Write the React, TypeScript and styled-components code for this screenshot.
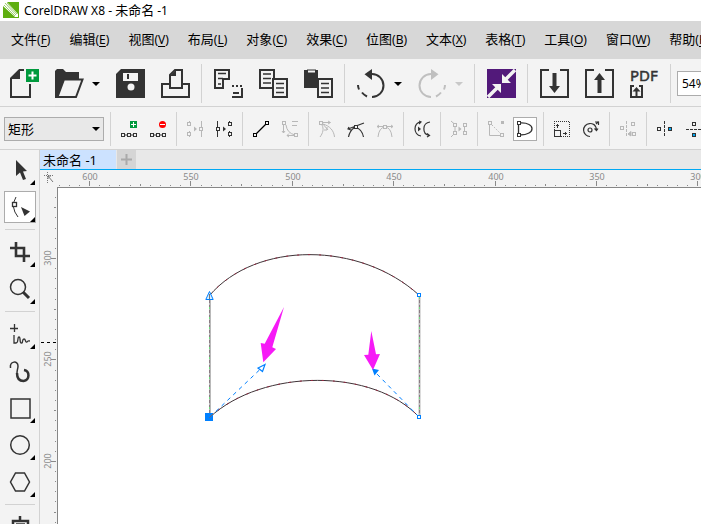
import React, { useEffect, useRef, useState } from "react";
import styled, { createGlobalStyle, css } from "styled-components";

const ink = "#333333";
const faint = "#b8b8b8";
const line = "#d2d2d2";
const panel = "#f3f3f3";
const blue = "#0080ff";
const cjk = `"Noto Sans", "Noto Sans CJK SC", sans-serif`;

const Global = createGlobalStyle`
  * { box-sizing: border-box; }
  html, body, #root { height: 100%; }
  body { margin: 0; overflow: hidden; background: #fff; color: #000; font-family: ${cjk}; }
  button { border: 0; padding: 0; background: none; color: inherit; font-family: inherit; }
  svg { display: block; flex: none; }
`;

const Window = styled.div`
  display: flex;
  flex-direction: column;
  height: 100vh;
  min-width: 0;
  overflow: hidden;
`;

const TitleBar = styled.header`
  display: flex;
  align-items: center;
  gap: 5px;
  height: 21px;
  flex: none;
  padding: 0 0 1px 3px;
  background: #fff;
  white-space: nowrap;
`;

const Title = styled.h1`
  margin: 0;
  font-size: 13px;
  line-height: 20px;
  font-weight: 400;
  font-family: ${cjk};
`;

const Latin = styled.span`
  font-size: 12px;
`;

const MenuBar = styled.nav`
  display: flex;
  align-items: center;
  gap: 19px;
  height: 38px;
  flex: none;
  padding: 0 0 2px 11px;
  background: #d7d7d7;
`;

const MenuItem = styled.button`
  flex: none;
  font-size: 13px;
  line-height: 20px;
  white-space: nowrap;
`;

const Key = styled.span`
  font-size: 12px;
  u { text-underline-offset: 2px; }
`;

const Bar = styled.div<{ $h: number }>`
  display: flex;
  align-items: center;
  flex: none;
  height: ${(p) => p.$h}px;
  padding-top: 2px;
  background: ${panel};
  border-bottom: 1px solid ${line};
`;

const Group = styled.div<{ $first?: boolean }>`
  display: flex;
  align-items: center;
  flex: none;
  gap: 16px;
  height: 39px;
  padding: 0 11px 0 ${(p) => (p.$first ? 10 : 12)}px;
  border-right: 1px solid ${line};
`;

const PropGroup = styled.div`
  display: flex;
  align-items: center;
  flex: none;
  gap: 13px;
  height: 34px;
  padding: 0 10px;
  border-right: 1px solid ${line};
`;

const PropButton = styled.button<{ $on?: boolean }>`
  flex: none;
  ${(p) =>
    p.$on &&
    css`
      margin: 0 -4px;
      padding: 3px;
      background: #fff;
      border: 1px solid #acacac;
    `}
`;

const Split = styled.div`
  display: flex;
  align-items: center;
`;

const ArrowButton = styled.button`
  display: flex;
  justify-content: flex-end;
  width: 16px;
  height: 29px;
  align-items: center;
`;

const ZoomInput = styled.input`
  width: 80px;
  height: 25px;
  flex: none;
  margin-left: 6px;
  padding: 0 4px;
  border: 1px solid #acacac;
  background: #fff;
  font: 12px ${cjk};
`;

const SelectBox = styled.label`
  position: relative;
  flex: none;
  width: 100px;
  margin: 0 6px 0 4px;
  svg { position: absolute; right: 4px; top: 10px; pointer-events: none; }
`;

const Select = styled.select`
  display: block;
  appearance: none;
  width: 100%;
  height: 24px;
  padding: 0 3px;
  border: 1px solid #acacac;
  border-radius: 0;
  background: #e8e8e8;
  color: #000;
  font: 13px ${cjk};
`;

const Rule = styled.span`
  flex: none;
  width: 1px;
  height: 34px;
  background: ${line};
`;

const Main = styled.main`
  display: flex;
  flex: 1;
  min-height: 0;
`;

const Toolbox = styled.aside`
  display: flex;
  flex-direction: column;
  gap: 5px;
  width: 40px;
  flex: none;
  padding: 4px 3px 0 4px;
  background: ${panel};
  border-right: 1px solid ${line};
  overflow: hidden;
`;

const Tool = styled.button<{ $on?: boolean }>`
  flex: none;
  width: 32px;
  height: 32px;
  ${(p) => p.$on && "background: #fff; box-shadow: inset 0 0 0 1px #acacac;"}
`;

const ToolRule = styled.span`
  flex: none;
  height: 1px;
  margin: 1px 1px;
  background: ${line};
`;

const Workspace = styled.section`
  display: flex;
  flex-direction: column;
  flex: 1;
  min-width: 0;
`;

const Tabs = styled.div`
  display: flex;
  gap: 1px;
  flex: none;
  height: 20px;
  background: #e8e8e8;
  border-bottom: 1px solid #00a8f3;
`;

const Tab = styled.button`
  width: 76px;
  padding: 0 3px;
  background: #cce2ff;
  font-size: 13px;
  line-height: 18px;
  text-align: left;
  white-space: nowrap;
`;

const AddTab = styled.button`
  display: grid;
  place-items: center;
  width: 19px;
  background: #d5d5d5;
`;

const RulerGrid = styled.div`
  display: grid;
  grid-template: 18px minmax(0, 1fr) / 18px minmax(0, 1fr);
  flex: 1;
  min-height: 0;
  background: ${panel};
`;

const Corner = styled.button`
  overflow: hidden;
`;

const TopRuler = styled.div`
  min-width: 0;
  overflow: hidden;
  margin-left: -1px;
  border-bottom: 1px solid #868686;
`;

const SideRuler = styled.div`
  min-height: 0;
  overflow: hidden;
  border-right: 1px solid #868686;
`;

const Canvas = styled.div`
  min-width: 0;
  min-height: 0;
  overflow: hidden;
  background: #fff;
`;

const Big = ({ c = ink, children }: { c?: string; children: React.ReactNode }) => (
  <svg width="29" height="29" viewBox="0 0 29 29" fill="none" stroke={c} strokeWidth="2" overflow="visible">
    {children}
  </svg>
);

const Small = ({ c = ink, children }: { c?: string; children: React.ReactNode }) => (
  <svg width="16" height="16" viewBox="0 0 16 16" fill="none" stroke={c} overflow="visible">
    {children}
  </svg>
);

const Node = ({ x, y, fill = panel }: { x: number; y: number; fill?: string }) => (
  <rect x={x + 0.5} y={y + 0.5} width="3" height="3" fill={fill} />
);

const Down = ({ c = "#000" }: { c?: string }) => (
  <svg width="8" height="4" viewBox="0 0 8 4">
    <path d="M0 0H8L4 4Z" fill={c} />
  </svg>
);

const PageLines = () => (
  <>
    <rect x="14" y="10" width="14" height="18" fill={panel} />
    <path d="M17 14.5H25M17 19H25M17 23.5H25" strokeWidth="1.5" />
  </>
);

const Turn = ({ c, flip }: { c?: string; flip?: boolean }) => (
  <Big c={c}>
    <g transform={flip ? "translate(28 0) scale(-1 1)" : undefined}>
      <path d="M15 5A11.500 11.500 0 1 1 15 28" />
      <path d="M10 27.500Q7 26 5 23.500M2 20.500Q1 18 1 16" />
      <path d="M7.500 5.200L15 0V11Z" fill={c || ink} stroke="none" />
    </g>
  </Big>
);

const menus = [
  ["文件", "F"], ["编辑", "E"], ["视图", "V"], ["布局", "L"], ["对象", "C"], ["效果", "C"],
  ["位图", "B"], ["文本", "X"], ["表格", "T"], ["工具", "O"], ["窗口", "W"], ["帮助", "H"],
];

const propGroups: { name: string; on?: boolean; icon: React.ReactNode }[][] = [
  [
    { name: "添加节点", icon: <Small><rect x="9" width="7" height="7" fill="#009a3d" stroke="none" /><path d="M12.5 1V6M10 3.5H15" stroke="#fff" /><path d="M2 14H14" /><Node x={0} y={12} /><Node x={6} y={12} /><Node x={12} y={12} /></Small> },
    { name: "删除节点", icon: <Small><circle cx="12.5" cy="3.5" r="3.5" fill="#f00" stroke="none" /><path d="M10 3.5H15" stroke="#fff" /><path d="M2 14H14" /><Node x={0} y={12} /><Node x={6} y={12} /><Node x={12} y={12} /></Small> },
  ],
  [
    { name: "连接节点", icon: <Small c={faint}><path d="M2.5 0V5M2.5 10V16M14.5 0V16" /><Node x={0} y={1} /><Node x={0} y={11} /><Node x={12} y={6} /><path d="M7 5.5L10 8L7 10.5Z" fill={faint} stroke="none" /></Small> },
    { name: "断开曲线", icon: <Small><path d="M1.5 0V16M13.5 0V5M13.5 10V16" /><Node x={0} y={6} /><Node x={12} y={1} /><Node x={12} y={11} /><path d="M7 5.5L10 8L7 10.5Z" fill={ink} stroke="none" /></Small> },
  ],
  [
    { name: "转换为线条", icon: <Small c="#000"><path d="M2 14L14 2" strokeWidth="1.3" /><Node x={0} y={12} /><Node x={12} y={0} /></Small> },
    { name: "转换为曲线", icon: <Small c={faint}><path d="M1.5 3V12M0 10L1.5 12L3 10M4 4Q5 12 13 14M13 14.500H5M7 12.500L5 14.500L7 16M10 .5H16M10 4.500H15" /><Node x={0} y={0} /><Node x={12} y={12} /></Small> },
  ],
  [
    { name: "尖突节点", icon: <Small c={faint}><path d="M2 1.5H11M9 0L11.5 1.5L9 3M3 2L9 9M8 6V9H5M4 3C11 5 15 10 15.5 16M3 4C5 8 4 12 1 16" /><Node x={0} y={0} /></Small> },
    { name: "平滑节点", icon: <Small><path d="M0 8L16 2M1 6L0 8L3 9M.5 16Q1.5 10 7 6Q14 8 15.5 16" strokeWidth="1.2" /><Node x={6} y={4} /></Small> },
    { name: "对称节点", icon: <Small c={faint}><path d="M0 5.5H16M2 4L0 5.5L2 7M14 4L16 5.5L14 7M1 16Q2 6.5 8 6Q14 6.5 15 16" /><Node x={6} y={4} /></Small> },
  ],
  [{ name: "反转方向", icon: <Small><path d="M7 1C-1 1-1 14 7 15M5 0L7 1L5 3M16 1C8 2 8 13 15 14.5M13 12.5L15.5 14.5L13 16" strokeWidth="1.2" /><path d="M4 5.5L7 8L4 10.5Z" fill={ink} stroke="none" /></Small> }],
  [{ name: "延长曲线", icon: <Small c={faint}><path d="M0 0L4 3.5V12L0 16M13.5 3V13" /><Node x={2} y={2} /><Node x={2} y={10} /><Node x={12} y={2} /><Node x={12} y={10} /><path d="M7.5 5.5L10.5 8L7.5 10.5Z" fill={faint} stroke="none" /></Small> }],
  [
    { name: "提取子路径", icon: <Small c={faint}><path d="M1.5 3V14.5H13" /><path d="M4 4L13 13" strokeDasharray="1.5 1.5" /><Node x={0} y={0} /><Node x={12} y={12} /><path d="M13 0H16V3H13Z" fill={faint} stroke="none" /></Small> },
    { name: "闭合曲线", on: true, icon: <Small><path d="M1.5 2V14M3 2C19 1 19 14 3 14" strokeWidth="1.3" /><Node x={0} y={0} fill="#fff" /><Node x={0} y={12} fill="#fff" /></Small> },
  ],
  [
    { name: "缩放节点", icon: <Small><path d="M0 .5H16M15.5 1V16M16 15.5H7M.5 0V9" strokeDasharray="1 1" /><rect x=".5" y="9.5" width="6" height="6" /><path d="M3.5 3V7M2 4.5H5M9 12.5H13M11.5 11V14" /></Small> },
    { name: "旋转节点", icon: <Small><path d="M13.5 8A6.5 6.5 0 1 0 7 15.5M10 3Q13 4 13.5 9M11.5 7.5L13.5 9.5L15 7.5M13 3L15.5 .5M12 1H15.5V4" strokeWidth="1.2" /><circle cx="7" cy="9" r="2" strokeWidth="1.2" /></Small> },
  ],
  [{ name: "对齐节点", icon: <Small c={faint}><path d="M6.5 0V16" strokeDasharray="3 1" /><Node x={0} y={5} /><Node x={11} y={1} /><Node x={12} y={11} /><path d="M8 13L11 10.5V15Z" fill={faint} /></Small> }],
  [
    { name: "水平反射节点", icon: <Small><path d="M7.5 0V16" strokeDasharray="3 1" /><Node x={0} y={6} /><Node x={11} y={6} fill="#00a8f3" /></Small> },
    { name: "垂直反射节点", icon: <Small><path d="M0 8.5H16" strokeDasharray="3 1" /><Node x={6} y={1} /><Node x={6} y={12} fill="#00a8f3" /></Small> },
  ],
];

const tools: ({ name: string; on?: boolean; plain?: boolean; icon: React.ReactNode } | null)[] = [
  { name: "选择工具", icon: <path d="M12 6V22L16 18.5L19 26L22 25L19 17.5L23 17Z" fill={ink} stroke="none" /> },
  { name: "形状工具", on: true, icon: <><path d="M12 6Q6 16 14 26" /><rect x="8.5" y="11.5" width="4" height="4" fill="#fff" strokeWidth="1.3" /><path d="M17 16L26 20.5L20.5 25Z" fill={ink} stroke="none" /></> },
  null,
  { name: "裁剪工具", icon: <path d="M6 12H20V26M12 6V20H26" strokeWidth="2.6" /> },
  { name: "缩放工具", icon: <><circle cx="14" cy="14" r="7.5" strokeWidth="1.5" /><path d="M19 19L25 25" strokeWidth="3" /></> },
  null,
  { name: "手绘工具", icon: <path d="M10.500 6V14M6 10.500H14M10 17V25H12C15 25 13 19 15 19C17 19 15 26 18 25C19 24 18 21 20 21C22 21 21 25 23 24C24 22 25 23 26 23" strokeWidth="1.300" /> },
  { name: "艺术笔工具", plain: true, icon: <><path d="M6.500 13C5.500 6 14 5 14 11C14 14 12.500 16 13 20" strokeWidth="1.500" /><path d="M13 18C13 24 16 26 19.500 26C26 25 26 16 20 15" strokeWidth="2.500" /></> },
  { name: "矩形工具", icon: <rect x="7" y="7" width="19" height="19" strokeWidth="1.5" /> },
  { name: "椭圆形工具", icon: <circle cx="16" cy="16" r="9.3" strokeWidth="1.5" /> },
  { name: "多边形工具", icon: <path d="M11.5 7H20.5L25.5 16L20.5 25H11.5L6.5 16Z" strokeWidth="1.5" /> },
  null,
  { name: "文本工具", icon: <path d="M16 5V9M9 26V10H24V26M12 13.500H21" strokeWidth="2.500" /> },
];

const STEP = 10.14;

const useSize = () => {
  const ref = useRef<HTMLDivElement>(null);
  const [size, setSize] = useState({ width: 644, height: 336 });
  useEffect(() => {
    if (!ref.current) return;
    const observer = new ResizeObserver(([entry]) => {
      const { width, height } = entry.contentRect;
      setSize({ width: Math.ceil(width), height: Math.ceil(height) });
    });
    observer.observe(ref.current);
    return () => observer.disconnect();
  }, []);
  return { ref, ...size };
};

const ticks = (origin: number, length: number) => {
  const first = Math.ceil(-origin / STEP);
  const last = Math.floor((length - 1 - origin) / STEP);
  return Array.from({ length: Math.max(0, last - first + 1) }, (_, i) => i + first);
};

const HorizontalRuler = () => {
  const { ref, width } = useSize();
  return (
    <TopRuler ref={ref}>
      <svg width={width} height="17" fill="#8a8a8a" fontFamily="Noto Sans" fontSize="9">
        {ticks(32, width).map((i) => {
          const x = Math.round(32 + i * STEP);
          const major = i % 10 === 0;
          const mid = Math.abs(i % 10) === 5;
          return (
            <React.Fragment key={i}>
              <rect x={x} y={major ? 11 : mid ? 14 : 15} width="1" height={major ? 5 : mid ? 2 : 1} />
              {major && <text x={x + 1} y="10" textAnchor="middle">{Math.abs(600 - i * 5)}</text>}
            </React.Fragment>
          );
        })}
      </svg>
    </TopRuler>
  );
};

const VerticalRuler = () => {
  const { ref, height } = useSize();
  return (
    <SideRuler ref={ref}>
      <svg width="17" height={height} fill="#8a8a8a" fontFamily="Noto Sans" fontSize="9">
        {ticks(70, height).map((i) => {
          const y = Math.round(70 + i * STEP);
          const major = i % 10 === 0;
          const mid = Math.abs(i % 10) === 5;
          return (
            <React.Fragment key={i}>
              <rect x={major ? 11 : mid ? 14 : 15} y={y} width={major ? 5 : mid ? 2 : 1} height="1" />
              {major && (
                <text transform={`translate(11 ${y}) rotate(-90)`} textAnchor="middle">{Math.abs(300 - i * 5)}</text>
              )}
            </React.Fragment>
          );
        })}
        <path d="M1 154.5H17" stroke="#000" strokeDasharray="3 3" />
      </svg>
    </SideRuler>
  );
};

const Drawing = () => (
  <svg width="643" height="336" viewBox="58 188 643 336" fill="none">
    <path d="M210 295V417M419.5 295V417" stroke="#b9b9b9" strokeWidth="2" />
    <path d="M209.5 295V417M419.5 295V417" stroke="#8c7b84" strokeDasharray="3 2" />
    <path d="M209.5 297V417M419.5 297V417" stroke="#6fdc83" strokeDasharray="2 8" />
    <path d="M209.5 295.5C256 241 360 241 419.5 295.5M209.5 417.5C263 368 374 368 419.5 417.5" stroke="#3f3438" />
    <path d="M209.5 295.5C256 241 360 241 419.5 295.5M209.5 417.5C263 368 374 368 419.5 417.5" stroke="#9b2740" strokeDasharray="2 9" />
    <path d="M210 417L261 368.5M419 417L376 373" stroke={blue} strokeDasharray="4 4" />
    <path d="M265 364.5L258 368L262.5 371.5Z" fill="#fff" stroke={blue} strokeWidth="1.2" />
    <path d="M372 368.5L379 370L374.5 375.5Z" fill={blue} />
    <path d="M209.5 291.5L205.8 299.5H213.2Z" fill="#d9efff" stroke={blue} />
    <path d="M209.5 294V299" stroke="#777" />
    <rect x="205" y="413" width="8" height="8" fill={blue} />
    <path d="M209.5 417.5L213 414" stroke="#7b6464" />
    <rect x="417.5" y="293.5" width="3" height="3" fill="#fff" stroke={blue} />
    <rect x="417.5" y="415.5" width="3" height="3" fill="#fff" stroke={blue} />
    <path d="M284 307L264.7 343.7L260.7 343L263.3 362.3L276 349L272.3 347.3Z" fill="#f61af6" />
    <path d="M371.3 331L368.3 354.7L364 355L373 370L380 354L376 354.3Z" fill="#f61af6" />
  </svg>
);

export default function App() {
  return (
    <Window>
      <Global />
      <TitleBar>
        <svg width="16" height="16" viewBox="0 0 16 16">
          <rect width="16" height="16" fill="#5fae10" />
          <path d="M0 0H4L15 12V15H12L0 4Z" fill="#fff" />
          <path d="M2 1L13 13M1 3L12 14M4 1L14 12" stroke="#5fae10" strokeWidth=".6" />
        </svg>
        <Title><Latin>CorelDRAW X8 - </Latin>未命名<Latin> -1</Latin></Title>
      </TitleBar>
      <MenuBar>
        {menus.map(([label, key]) => (
          <MenuItem key={label}>{label}<Key>(<u>{key}</u>)</Key></MenuItem>
        ))}
      </MenuBar>
      <Bar $h={48}>
        <Group $first>
          <button aria-label="新建"><Big><path d="M20 15V28H1V9.500L9.500 1H14" /><path d="M1 10L10 1V10Z" fill={ink} stroke="none" /><rect x="16" width="13" height="13" fill="#009a3d" stroke="none" /><path d="M22.500 2.500V10.500M18.500 6.500H26.500" stroke="#fff" /></Big></button>
          <Split>
            <button aria-label="打开"><Big><path d="M0 2L2 0H8L11 3H24V10H9L3 29H0Z" fill={ink} stroke="none" /><path d="M9 10.500H27.500L21 28H2.500Z" fill={panel} /></Big></button>
            <ArrowButton aria-label="打开选项"><Down /></ArrowButton>
          </Split>
          <button aria-label="保存"><Big><path d="M5 0H29V29H0V5Z" fill={ink} stroke="none" /><rect x="7" y="4" width="15" height="8" fill={panel} stroke="none" /><path d="M12 5V10" /><circle cx="15" cy="18" r="3.500" fill={panel} stroke="none" /></Big></button>
          <button aria-label="打印"><Big><path d="M8 15H1V28H28V15H21" /><path d="M9 19V6L14 1H21V19H8" /><path d="M9 7L15 1V7Z" fill={ink} stroke="none" /></Big></button>
        </Group>
        <Group>
          <button aria-label="剪切"><Big><path d="M1 1H15V10H9V19H1Z" /><path d="M4 4.500H12M4 9.500H9M4 15H7" strokeWidth="1.500" /><path d="M18 17H29" strokeDasharray="2 2" /><path d="M28 19V28H18M19 24H25" /></Big></button>
          <button aria-label="复制"><Big><path d="M14 19H1V1H15V10" /><path d="M4 5H12M4 9.500H12M4 14H12" strokeWidth="1.500" /><PageLines /></Big></button>
          <button aria-label="粘贴"><Big><path d="M0 1H14V19H0Z" fill={ink} stroke="none" /><rect x="3.500" y="1" width="8" height="3" fill={panel} strokeWidth="1" /><PageLines /></Big></button>
        </Group>
        <Group>
          <Split>
            <button aria-label="撤消"><Turn /></button>
            <ArrowButton aria-label="撤消选项"><Down /></ArrowButton>
          </Split>
          <Split>
            <button aria-label="重做"><Turn c="#bfbfbf" flip /></button>
            <ArrowButton aria-label="重做选项"><Down c="#c8c8c8" /></ArrowButton>
          </Split>
        </Group>
        <Group>
          <button aria-label="搜索内容"><Big><rect width="29" height="29" fill="#52197a" stroke="none" /><path d="M18 11L28 1M11 18L1 28" stroke="#f3f3f3" strokeWidth="3.500" /><path d="M15 5V14H24ZM5 15H14V24Z" fill="#f3f3f3" stroke="none" /></Big></button>
        </Group>
        <Group>
          <button aria-label="导入"><Big><path d="M9 1H1V28H28V1H20" /><path d="M14.500 4V18" strokeWidth="4" /><path d="M9 17H20L14.500 24Z" fill={ink} stroke="none" /></Big></button>
          <button aria-label="导出"><Big><path d="M9 1H1V28H28V1H20" /><path d="M14.500 24V9" strokeWidth="4" /><path d="M9 11H20L14.500 4Z" fill={ink} stroke="none" /></Big></button>
          <button aria-label="发布为 PDF"><Big><text x="0" y="12" fill={ink} strokeWidth=".5" fontFamily="Noto Sans" fontSize="15">PDF</text><path d="M4 17H1V28H12V17H9" /><path d="M6.500 27V21" /><path d="M2.500 22.500L6.500 18L10.500 22.500Z" fill={ink} stroke="none" /></Big></button>
        </Group>
        <ZoomInput aria-label="缩放级别" defaultValue="54%" />
      </Bar>
      <Bar $h={43}>
        <SelectBox>
          <Select aria-label="选取范围模式" defaultValue="矩形"><option>矩形</option></Select>
          <Down />
        </SelectBox>
        <Rule />
        {propGroups.map((group, i) => (
          <PropGroup key={i}>
            {group.map((b) => (
              <PropButton key={b.name} aria-label={b.name} $on={b.on}>{b.icon}</PropButton>
            ))}
          </PropGroup>
        ))}
      </Bar>
      <Main>
        <Toolbox>
          {tools.map((t, i) =>
            t ? (
              <Tool key={i} aria-label={t.name} $on={t.on}>
                <svg width="32" height="32" viewBox="0 0 32 32" fill="none" stroke={ink}>
                  {t.icon}
                  {!t.plain && <path d="M31 26V31H26Z" fill="#000" stroke="none" />}
                </svg>
              </Tool>
            ) : (
              <ToolRule key={i} />
            )
          )}
        </Toolbox>
        <Workspace>
          <Tabs>
            <Tab>未命名 -1</Tab>
            <AddTab aria-label="新建文档">
              <svg width="11" height="11" viewBox="0 0 11 11"><path d="M5.500 0V11M0 5.500H11" stroke="#aaa" strokeWidth="2" /></svg>
            </AddTab>
          </Tabs>
          <RulerGrid>
            <Corner aria-label="标尺原点">
              <svg width="18" height="18" viewBox="0 0 18 18" fill="none" stroke="#777">
                <path d="M4 5.500H14M7.500 2V14" strokeDasharray="1 1" />
                <path d="M8 6L13 12M8 9V6H11" />
              </svg>
            </Corner>
            <HorizontalRuler />
            <VerticalRuler />
            <Canvas><Drawing /></Canvas>
          </RulerGrid>
        </Workspace>
      </Main>
    </Window>
  );
}
